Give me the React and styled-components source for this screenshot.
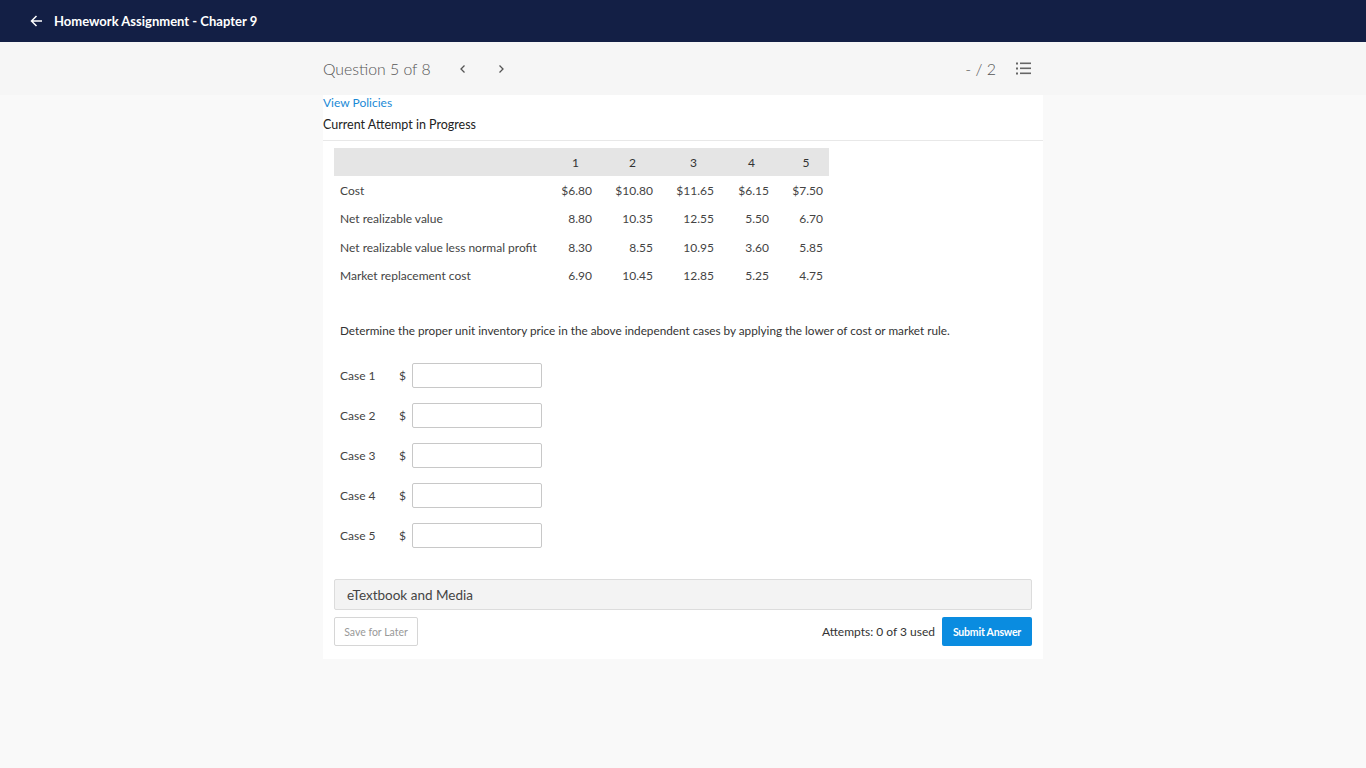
import React from 'react';
import styled, { createGlobalStyle } from 'styled-components';

const GlobalStyle = createGlobalStyle`
  html, body {
    margin: 0;
    padding: 0;
    background: #f9f9f9;
    font-family: Lato, "Open Sans", Arial, sans-serif;
    color: #333;
  }
  * { box-sizing: border-box; }
`;

const TopBar = styled.header`
  height: 42px;
  background: #131f45;
  display: flex;
  align-items: center;
  padding-left: 30px;
  gap: 11px;
  color: #fff;
  font-size: 13px;
  font-weight: 700;
`;

const QuestionBand = styled.div`
  height: 53px;
  background: #f6f6f6;
`;

const Inner = styled.div`
  width: 720px;
  margin: 0 auto;
`;

const QuestionBar = styled(Inner)`
  height: 53px;
  display: flex;
  align-items: center;
`;

const QuestionTitle = styled.span`
  font-size: 15.8px;
  font-weight: 300;
  color: #555;
  margin-right: 19px;
`;

const NavButton = styled.button`
  border: none;
  background: none;
  padding: 0;
  width: 26px;
  height: 26px;
  display: flex;
  align-items: center;
  justify-content: center;
  margin-right: 12px;
  color: #555;
  cursor: pointer;
`;

const Score = styled.span`
  margin-left: auto;
  font-size: 16px;
  font-weight: 300;
  color: #555;
  margin-right: 20px;
`;

const Card = styled(Inner)`
  background: #fff;
  padding-bottom: 13px;
`;

const PolicyLink = styled.a`
  display: block;
  font-size: 12px;
  color: #1a8ad6;
  text-decoration: none;
  line-height: 16px;
`;

const AttemptLabel = styled.div`
  margin-top: 6px;
  font-size: 12.5px;
  color: #222;
  line-height: 16px;
  padding-bottom: 7px;
  border-bottom: 1px solid #e8e8e8;
`;

const Body = styled.div`
  padding: 7px 11px 0;
`;

const Table = styled.table`
  border-collapse: collapse;
  table-layout: fixed;
  width: 495px;
  font-size: 12px;
  color: #444;
`;

const Col = styled.col`
  width: ${p => p.$w}px;
`;

const HeadCell = styled.th`
  background: #e5e5e5;
  height: 28px;
  font-weight: 400;
  text-align: center;
  padding: 0 6px 0 14px;
  color: #333;
`;

const LabelCell = styled.td`
  height: 28.5px;
  padding: 0 6px;
  text-align: left;
  white-space: nowrap;
`;

const NumCell = styled.td`
  text-align: right;
  padding: 0 6px 0 0;
`;

const Prompt = styled.p`
  margin: 33px 0 0 6px;
  font-size: 11.75px;
  color: #333;
`;

const CaseList = styled.div`
  margin-top: 25px;
  display: flex;
  flex-direction: column;
  gap: 15px;
  padding-left: 6px;
`;

const CaseRow = styled.label`
  display: flex;
  align-items: center;
  font-size: 12px;
  color: #444;
`;

const CaseName = styled.span`
  width: 59px;
`;

const Dollar = styled.span`
  width: 13px;
`;

const Field = styled.input`
  width: 130px;
  height: 25px;
  border: 1px solid #c8c8c8;
  border-radius: 2px;
  font-family: inherit;
`;

const MediaBar = styled.div`
  margin-top: 31px;
  height: 31px;
  background: #f3f3f3;
  border: 1px solid #dcdcdc;
  border-radius: 2px;
  display: flex;
  align-items: center;
  padding-left: 12px;
  font-size: 13.5px;
  color: #444;
`;

const Actions = styled.div`
  margin-top: 7px;
  display: flex;
  align-items: center;
`;

const SaveButton = styled.button`
  width: 84px;
  height: 29px;
  border: 1px solid #d6d6d6;
  border-radius: 2px;
  background: #fff;
  color: #999;
  font-family: inherit;
  font-size: 10.5px;
  padding: 0;
`;

const Attempts = styled.span`
  margin-left: auto;
  margin-right: 7px;
  font-size: 12px;
  color: #333;
`;

const SubmitButton = styled.button`
  width: 90px;
  height: 29px;
  border: none;
  border-radius: 2px;
  background: #0a8ce0;
  color: #fff;
  font-family: inherit;
  font-size: 10.5px;
  font-weight: 700;
  letter-spacing: -0.2px;
  padding: 0;
`;

const widths = [211, 53, 61, 61, 55, 54];
const rows = [
  ['Cost', '$6.80', '$10.80', '$11.65', '$6.15', '$7.50'],
  ['Net realizable value', '8.80', '10.35', '12.55', '5.50', '6.70'],
  ['Net realizable value less normal profit', '8.30', '8.55', '10.95', '3.60', '5.85'],
  ['Market replacement cost', '6.90', '10.45', '12.85', '5.25', '4.75'],
];

const ListIcon = () => (
  <svg width="15" height="13" viewBox="0 0 15 13" fill="#666">
    <rect x="0" y="0.5" width="2" height="2" />
    <rect x="0" y="5.5" width="2" height="2" />
    <rect x="0" y="10.5" width="2" height="2" />
    <rect x="4" y="0.5" width="11" height="1.6" />
    <rect x="4" y="5.5" width="11" height="1.6" />
    <rect x="4" y="10.5" width="11" height="1.6" />
  </svg>
);

export default function App() {
  return (
    <>
      <GlobalStyle />
      <TopBar>
        <svg width="13" height="12" viewBox="0 0 13 12" fill="none" stroke="#fff" strokeWidth="1.5">
          <path d="M12 6H1.5M6.5 1L1.5 6l5 5" />
        </svg>
        Homework Assignment - Chapter 9
      </TopBar>
      <QuestionBand>
        <QuestionBar>
          <QuestionTitle>Question 5 of 8</QuestionTitle>
          <NavButton aria-label="previous">
            <svg width="8" height="10" viewBox="0 0 8 10" fill="none" stroke="#555" strokeWidth="1.3">
              <path d="M5.5 1.5L2 5l3.5 3.5" />
            </svg>
          </NavButton>
          <NavButton aria-label="next">
            <svg width="8" height="10" viewBox="0 0 8 10" fill="none" stroke="#555" strokeWidth="1.3">
              <path d="M2.5 1.5L6 5 2.5 8.5" />
            </svg>
          </NavButton>
          <Score>- / 2</Score>
          <ListIcon />
          <span style={{ width: 12 }} />
        </QuestionBar>
      </QuestionBand>
      <Card>
        <PolicyLink href="#">View Policies</PolicyLink>
        <AttemptLabel>Current Attempt in Progress</AttemptLabel>
        <Body>
          <Table>
            <colgroup>
              {widths.map((w, i) => <Col key={i} $w={w} />)}
            </colgroup>
            <thead>
              <tr>
                <HeadCell />
                {[1, 2, 3, 4, 5].map(n => (
                  <HeadCell key={n}>{n}</HeadCell>
                ))}
              </tr>
            </thead>
            <tbody>
              {rows.map(r => (
                <tr key={r[0]}>
                  <LabelCell>{r[0]}</LabelCell>
                  {r.slice(1).map((v, i) => (
                    <NumCell key={i}>{v}</NumCell>
                  ))}
                </tr>
              ))}
            </tbody>
          </Table>
          <Prompt>
            Determine the proper unit inventory price in the above independent cases by applying the lower of cost or market rule.
          </Prompt>
          <CaseList>
            {[1, 2, 3, 4, 5].map(n => (
              <CaseRow key={n}>
                <CaseName>Case {n}</CaseName>
                <Dollar>$</Dollar>
                <Field type="text" />
              </CaseRow>
            ))}
          </CaseList>
          <MediaBar>eTextbook and Media</MediaBar>
          <Actions>
            <SaveButton>Save for Later</SaveButton>
            <Attempts>Attempts: 0 of 3 used</Attempts>
            <SubmitButton>Submit Answer</SubmitButton>
          </Actions>
        </Body>
      </Card>
    </>
  );
}
